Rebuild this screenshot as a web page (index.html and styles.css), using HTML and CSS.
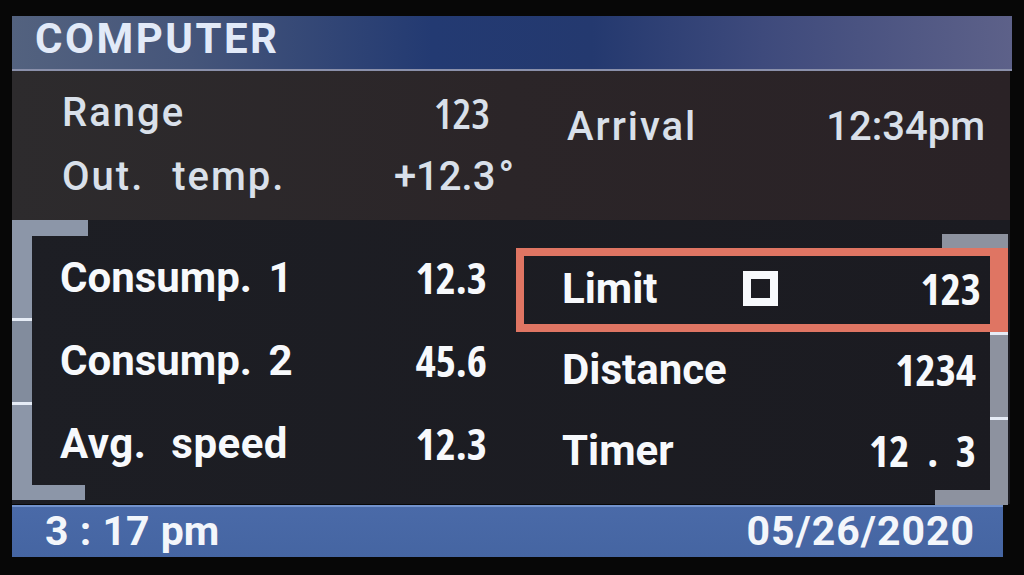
FILE: index.html
```html
<!DOCTYPE html>
<html lang="en">
<head>
<meta charset="utf-8">
<title>Computer</title>
<link rel="stylesheet" href="styles.css">
</head>
<body>
<div class="screen">
  <header class="title-bar"><h1 class="title">COMPUTER</h1></header>

  <section class="info">
    <div class="info-col">
      <div class="info-row"><span class="info-lbl">Range</span><span class="info-val narrow">123</span></div>
      <div class="info-row"><span class="info-lbl">Out. temp.</span><span class="info-val">+12.3<span class="deg">°</span></span></div>
    </div>
    <div class="info-col info-col-right">
      <div class="info-row"><span class="info-lbl">Arrival</span><span class="info-val">12:34pm</span></div>
    </div>
  </section>

  <section class="menu">
    <div class="side side-left">
      <div class="bar">
        <div class="seg seg-outer"></div>
        <div class="seg seg-mid sep"></div>
        <div class="seg seg-outer sep"></div>
      </div>
      <div class="side-body">
        <div class="arm-row arm-row-top"><div class="arm arm-lt"></div></div>
        <div class="item item-l1"><span class="lbl">Consump. 1</span><span class="val">12.3</span></div>
        <div class="item item-l2"><span class="lbl">Consump. 2</span><span class="val">45.6</span></div>
        <div class="item item-l3"><span class="lbl lbl-wide">Avg. speed</span><span class="val">12.3</span></div>
        <div class="arm-row arm-row-bottom"><div class="arm arm-lb"></div></div>
      </div>
    </div>

    <div class="side side-right">
      <div class="arm-row arm-row-top end"><div class="arm arm-rt"></div></div>
      <div class="item-active">
        <span class="lbl">Limit</span>
        <span class="check"></span>
        <span class="val">123</span>
      </div>
      <div class="rrow rrow-2">
        <div class="item item-r"><span class="lbl">Distance</span><span class="val">1234</span></div>
        <div class="rseg sep"></div>
      </div>
      <div class="rrow rrow-3">
        <div class="item item-r"><span class="lbl">Timer</span><span class="val val-spaced">12 . 3</span></div>
        <div class="rseg sep"></div>
      </div>
      <div class="arm-row arm-row-bottom end"><div class="arm arm-rb"></div></div>
    </div>
  </section>

  <footer class="status-bar">
    <span class="clock">3 : 17 pm</span>
    <span class="date">05/26/2020</span>
  </footer>
</div>
</body>
</html>
```

FILE: styles.css
```css
* {
  box-sizing: border-box;
  margin: 0;
  padding: 0;
}

html, body {
  width: 1024px;
  height: 575px;
  overflow: hidden;
}

body {
  background: #070707;
  font-family: Roboto, "Liberation Sans", sans-serif;
}

.screen {
  margin: 16px 0 0 12px;
  width: 998px;
  display: flex;
  flex-direction: column;
}

/* ---------- title bar ---------- */
.title-bar {
  width: 1000px;
  height: 55px;
  display: flex;
  align-items: center;
  padding: 0 0 7px 23px;
  background: linear-gradient(90deg, #53627f 0%, #45557a 18%, #233a72 42%, #24396f 58%, #3e4a7c 75%, #5d6189 100%);
  border-bottom: 2px solid #8a90ab;
}

.title {
  font-size: 42px;
  font-weight: 700;
  line-height: 1;
  letter-spacing: 2.5px;
  color: #e2eaf8;
}

/* ---------- info (top) ---------- */
.info {
  height: 149px;
  display: grid;
  grid-template-columns: 428px 418px;
  column-gap: 77px;
  padding: 9px 0 0 50px;
  background: linear-gradient(90deg, #2d2b2d 0%, #2b2528 50%, #2a2226 100%);
}

.info-col-right {
  margin-top: 14px;
}

.info-row {
  height: 64px;
  display: flex;
  align-items: center;
  justify-content: space-between;
  font-size: 40px;
  font-weight: 500;
  color: #d9e0ea;
}

.info-lbl {
  letter-spacing: 2px;
  word-spacing: 16px;
}

.info-val {
  letter-spacing: 0;
}

.info-val.narrow {
  font-family: "Open Sans", Roboto, sans-serif;
  font-stretch: 75%;
  font-weight: 600;
  font-size: 42px;
}

.deg {
  margin-right: -24px;
  margin-left: 3px;
  font-weight: 700;
  font-size: 40px;
}

/* ---------- menu (middle) ---------- */
.menu {
  height: 284px;
  display: flex;
  gap: 6px;
  background: linear-gradient(90deg, #1d1e24 0%, #1b1b21 100%);
}

.side-left {
  width: 498px;
  height: 280px;
  display: flex;
}

.bar {
  width: 20px;
  display: flex;
  flex-direction: column;
}

.seg {
  background: #8c96a8;
}

.seg-outer {
  height: 98px;
}

.seg-mid {
  height: 84px;
  background: #828c9d;
}

.sep {
  border-top: 3px solid #e6ecf6;
}

.side-body {
  flex: 1;
  display: flex;
  flex-direction: column;
}

.arm-row {
  display: flex;
}

.arm-row-top {
  height: 16px;
}

.arm-row-bottom {
  height: 15px;
}

.arm-row.end {
  justify-content: flex-end;
}

.arm {
  height: 100%;
  background: #8c96a8;
}

.arm-lt { width: 56px; }
.arm-lb { width: 53px; }

.item {
  display: flex;
  align-items: center;
  justify-content: space-between;
  font-size: 42px;
  font-weight: 700;
  color: #f7f9fc;
}

.lbl {
  letter-spacing: 0;
  word-spacing: 6px;
}

.lbl-wide {
  letter-spacing: 0.5px;
  word-spacing: 14px;
}

.val {
  font-family: "Open Sans", Roboto, sans-serif;
  font-stretch: 75%;
  font-weight: 700;
  font-size: 43px;
}

.val-spaced {
  word-spacing: 10px;
}

.item-l1 { height: 82px; padding: 0 23px 0 28px; }
.item-l2 { height: 84px; padding: 0 23px 0 28px; }
.item-l3 { height: 83px; padding: 0 23px 0 28px; }

.side-right {
  width: 492px;
  height: 271px;
  margin-top: 14px;
  display: flex;
  flex-direction: column;
}

.arm-rt { width: 66px; background: #8d929f; }
.arm-rb { width: 73px; background: #8d929f; }

.side-right .arm-row-top { height: 14px; }

.item-active {
  height: 84px;
  display: grid;
  grid-template-columns: 181px 35px 1fr;
  align-items: center;
  padding: 0 9px 4px 38px;
  border: 8px solid #df7563;
  border-right-width: 18px;
  font-size: 42px;
  font-weight: 700;
  color: #f7f9fc;
}

.item-active .val {
  text-align: right;
}

.check {
  width: 35px;
  height: 35px;
  border: 8px solid #f7f9fc;
}

.rrow {
  display: flex;
}

.rrow-2 { height: 85px; }
.rrow-3 { height: 73px; }

.item-r {
  flex: 1;
  padding: 0 14px 0 46px;
}

.rrow-2 .item-r { padding-bottom: 11px; }
.rrow-3 .item-r { padding-bottom: 7px; }

.rseg {
  width: 18px;
  background: #8d929f;
}

.rseg.sep {
  border-top: 3px solid #e6ecf6;
}

/* ---------- status bar ---------- */
.status-bar {
  width: 991px;
  height: 52px;
  margin-top: 1px;
  display: flex;
  align-items: center;
  justify-content: space-between;
  padding: 0 28px 0 33px;
  background: linear-gradient(180deg, #7292cc 0, #7292cc 2px, #4a6aa8 2px, #4565a2 100%);
  font-size: 41px;
  font-weight: 700;
  color: #f3f6fb;
}

.clock {
  word-spacing: 1px;
}

.date {
  letter-spacing: 1px;
}
```
